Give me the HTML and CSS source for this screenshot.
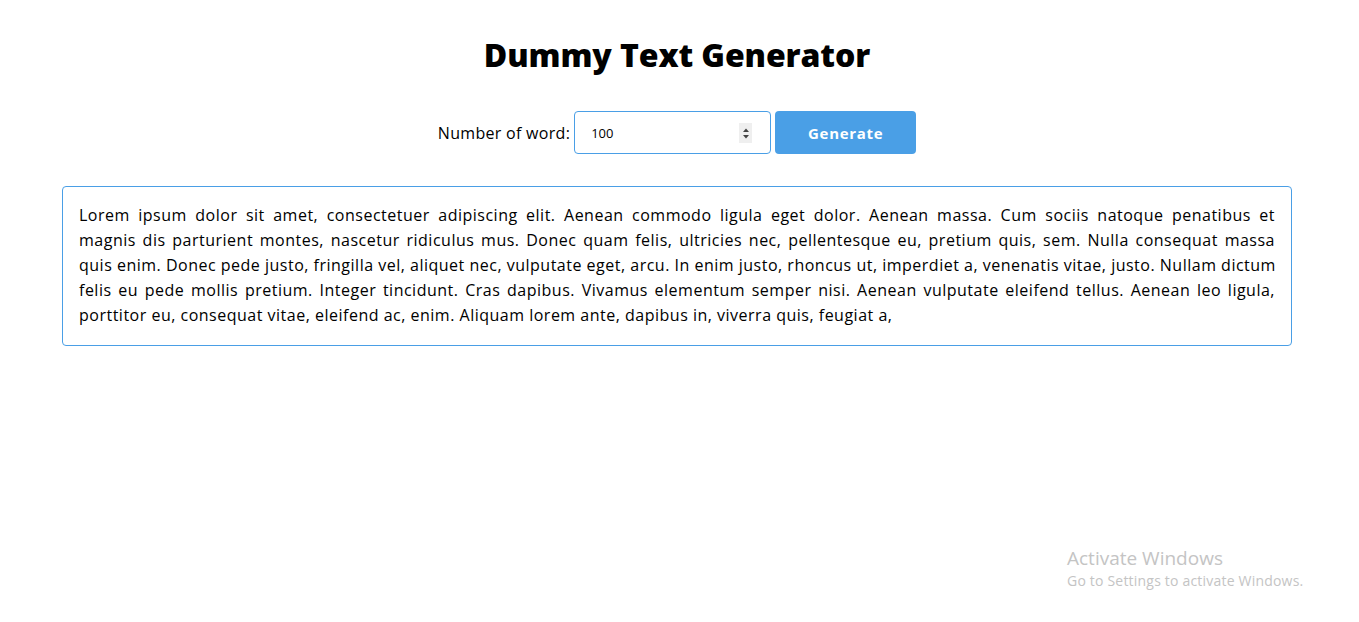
FILE: index.html
```html
<!DOCTYPE html>
<html lang="en">
<head>
<meta charset="utf-8">
<title>Dummy Text Generator</title>
<link rel="stylesheet" href="styles.css">
</head>
<body>
<main class="page">
  <h1 class="title">Dummy Text Generator</h1>
  <form class="controls">
    <label class="label" for="count">Number of word:</label>
    <div class="field">
      <input class="field-input" id="count" type="text" value="100">
      <span class="spin">
        <svg width="10" height="16" viewBox="0 0 10 16"><path d="M2 7 L5 3.5 L8 7 Z" fill="#444"/><path d="M2 10 L5 13.5 L8 10 Z" fill="#444"/></svg>
      </span>
    </div>
    <button class="btn" type="button">Generate</button>
  </form>
  <div class="output">
    <span class="line">Lorem ipsum dolor sit amet, consectetuer adipiscing elit. Aenean commodo ligula eget dolor. Aenean massa. Cum sociis natoque penatibus et</span>
    <span class="line">magnis dis parturient montes, nascetur ridiculus mus. Donec quam felis, ultricies nec, pellentesque eu, pretium quis, sem. Nulla consequat massa</span>
    <span class="line">quis enim. Donec pede justo, fringilla vel, aliquet nec, vulputate eget, arcu. In enim justo, rhoncus ut, imperdiet a, venenatis vitae, justo. Nullam dictum</span>
    <span class="line">felis eu pede mollis pretium. Integer tincidunt. Cras dapibus. Vivamus elementum semper nisi. Aenean vulputate eleifend tellus. Aenean leo ligula,</span>
    <span class="line last">porttitor eu, consequat vitae, eleifend ac, enim. Aliquam lorem ante, dapibus in, viverra quis, feugiat a,</span>
  </div>
</main>
<div class="watermark">
  <div class="wm-title">Activate Windows</div>
  <div class="wm-sub">Go to Settings to activate Windows.</div>
</div>
</body>
</html>
```

FILE: styles.css
```css
html, body {
  margin: 0;
  padding: 0;
  background: #ffffff;
}
body {
  font-family: "Open Sans", "Noto Sans", sans-serif;
  color: #000;
  width: 1359px;
  height: 622px;
  overflow: hidden;
  position: relative;
}
.page {
  width: 1230px;
  margin-left: 62px;
  padding-top: 33px;
  display: flex;
  flex-direction: column;
  align-items: center;
}
.title {
  margin: 0;
  font-size: 32px;
  font-weight: 800;
  line-height: 44px;
  letter-spacing: -0.1px;
}
.controls {
  display: flex;
  align-items: center;
  gap: 4px;
  margin-top: 34px;
}
.label {
  font-size: 16px;
  letter-spacing: 0.3px;
}
.field {
  width: 197px;
  height: 43px;
  box-sizing: border-box;
  border: 1px solid #4a9fe6;
  border-radius: 4px;
  display: flex;
  align-items: center;
  padding: 0 18px 0 16px;
}
.field-input {
  flex: 1;
  min-width: 0;
  border: none;
  outline: none;
  font-family: inherit;
  font-size: 13px;
  padding: 0;
  background: transparent;
  color: #000;
}
.spin {
  width: 13px;
  height: 20px;
  background: #efefef;
  display: flex;
  align-items: center;
  justify-content: center;
}
.btn {
  width: 141px;
  height: 43px;
  border: none;
  border-radius: 4px;
  background: #4a9fe6;
  color: #fff;
  font-family: inherit;
  font-size: 15px;
  font-weight: 700;
  letter-spacing: 0.7px;
}
.output {
  align-self: stretch;
  margin-top: 32px;
  border: 1px solid #4a9fe6;
  border-radius: 4px;
  padding: 16px 16px 17px 16px;
  font-size: 16px;
  letter-spacing: 0.5px;
  line-height: 25px;
}
.line {
  display: block;
  text-align: justify;
  text-align-last: justify;
  white-space: nowrap;
}
.line.last {
  text-align-last: left;
}
.watermark {
  position: absolute;
  left: 1067px;
  top: 546px;
  color: #c4c4c4;
  font-family: "Open Sans", sans-serif;
}
.wm-title {
  font-size: 19px;
  line-height: 24px;
}
.wm-sub {
  font-size: 14px;
  letter-spacing: 0.2px;
  line-height: 21px;
}
```
